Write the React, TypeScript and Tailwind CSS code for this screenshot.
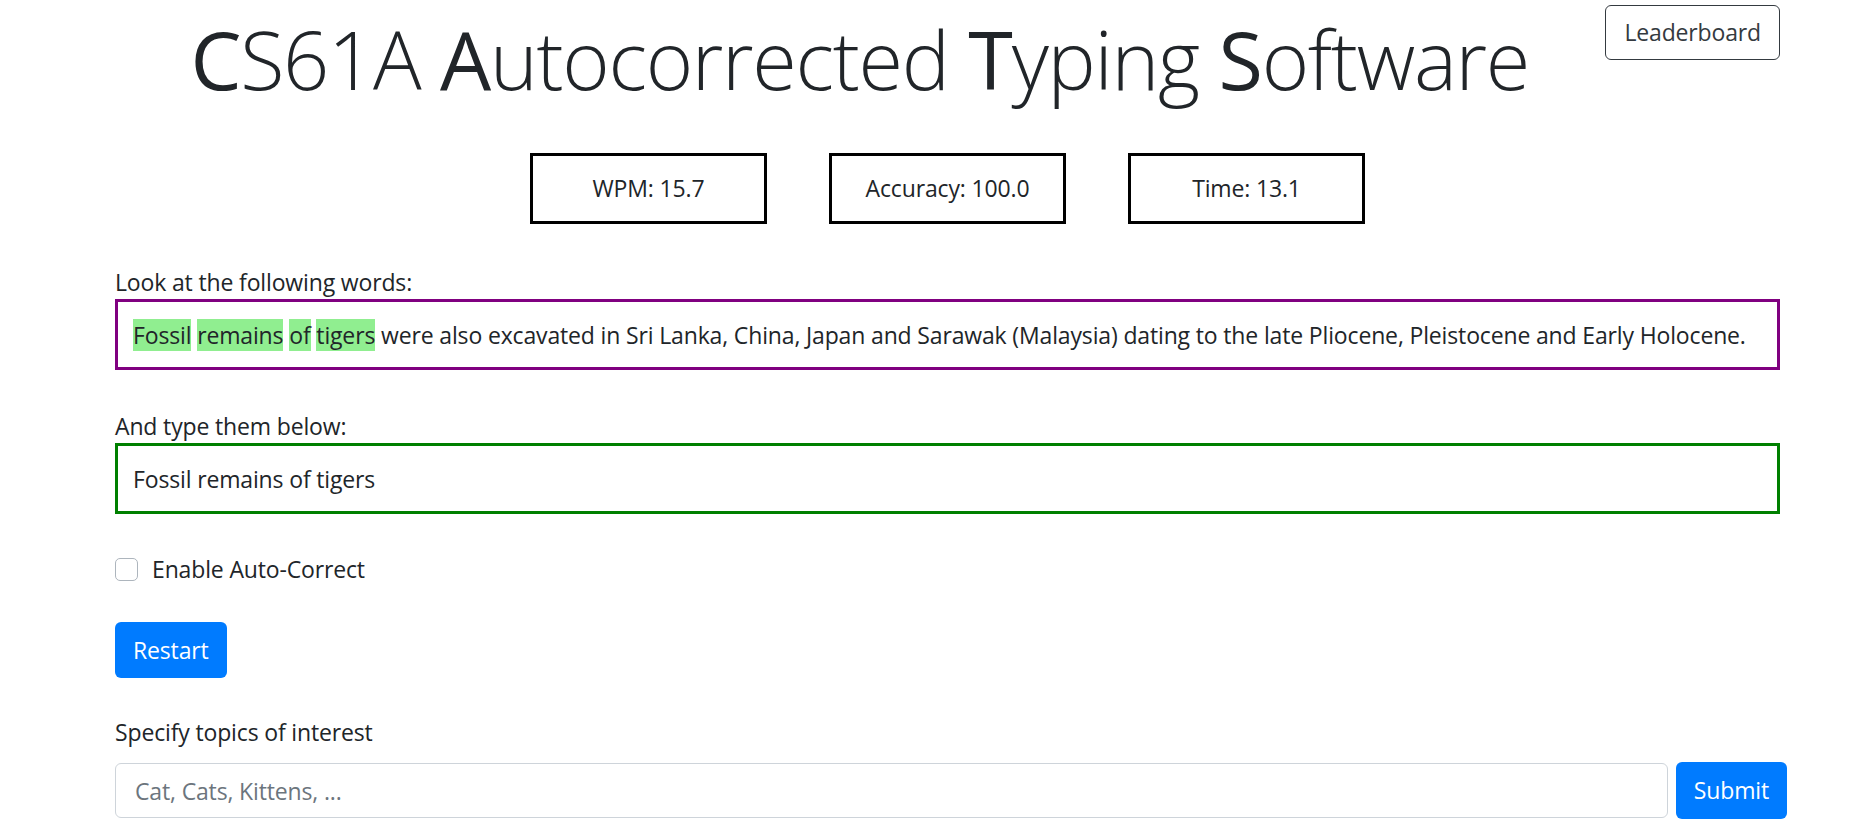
import { useState } from "react";

const stats = [
    { label: "WPM", value: "15.7" },
    { label: "Accuracy", value: "100.0" },
    { label: "Time", value: "13.1" },
];

const typedWords = ["Fossil", "remains", "of", "tigers"];
const restOfPrompt =
    "were also excavated in Sri Lanka, China, Japan and Sarawak (Malaysia) dating to the late Pliocene, Pleistocene and Early Holocene.";

export default function App() {
    const [typed, setTyped] = useState("Fossil remains of tigers");
    const [autoCorrect, setAutoCorrect] = useState(false);
    const [topics, setTopics] = useState("");

    return (
        <div className="min-h-screen bg-white text-[#212529] font-['Open_Sans',sans-serif] text-[23px] tracking-[-0.15px] leading-[1.5]">
            <div className="w-[1665px] ml-[115px]">
                {/* header */}
                <div className="flex items-start">
                    <h1 className="w-[1492px] text-center text-[81px] tracking-[-1.3px] font-light leading-[1.2] mt-[10px]">
                        <span className="font-normal">C</span>S61A <span className="font-normal">A</span>utocorrected{" "}
                        <span className="font-normal">T</span>yping <span className="font-normal">S</span>oftware
                    </h1>
                    <button className="ml-[1px] mt-[5px] h-[55px] px-[18px] border border-[#343a40] rounded-[6px] text-[#343a40] leading-none">
                        Leaderboard
                    </button>
                </div>

                {/* stats */}
                <div className="flex justify-center gap-[62px] mt-[46px]">
                    {stats.map((s) => (
                        <div
                            key={s.label}
                            className="w-[237px] h-[71px] border-[3px] border-black flex items-center justify-center"
                        >
                            {s.label}: {s.value}
                        </div>
                    ))}
                </div>

                {/* prompt */}
                <div className="mt-[41px] leading-[34px]">Look at the following words:</div>
                <div className="h-[71px] border-[3px] border-[#800080] flex items-center px-[15px] whitespace-nowrap">
                    <span className="leading-[38px]">
                        {typedWords.map((w) => (
                            <span key={w}>
                                <span className="bg-[#90ee90]">{w}</span>{" "}
                            </span>
                        ))}
                        {restOfPrompt}
                    </span>
                </div>

                {/* typing area */}
                <div className="mt-[39px] leading-[34px]">And type them below:</div>
                <input
                    value={typed}
                    onChange={(e) => setTyped(e.target.value)}
                    className="block w-full h-[71px] border-[3px] border-[#008000] px-[15px] outline-none"
                />

                {/* auto-correct */}
                <label className="mt-[37px] flex items-center h-[36px]">
                    <input
                        type="checkbox"
                        checked={autoCorrect}
                        onChange={(e) => setAutoCorrect(e.target.checked)}
                        className="appearance-none w-[23px] h-[23px] border border-[#adb5bd] rounded-[5px] bg-white"
                    />
                    <span className="ml-[14px]">Enable Auto-Correct</span>
                </label>

                <button className="mt-[35px] h-[56px] px-[18px] bg-[#007bff] text-white rounded-[6px] leading-none">
                    Restart
                </button>

                {/* topics */}
                <div className="mt-[37px] leading-[34px]">Specify topics of interest</div>
                <div className="mt-[13px] flex items-center w-[1672px]">
                    <input
                        value={topics}
                        onChange={(e) => setTopics(e.target.value)}
                        placeholder="Cat, Cats, Kittens, ..."
                        className="flex-1 h-[55px] border border-[#ced4da] rounded-[6px] px-[19px] outline-none placeholder:text-[#6c757d]"
                    />
                    <button className="ml-[8px] h-[57px] px-[18px] bg-[#007bff] text-white rounded-[6px] leading-none">
                        Submit
                    </button>
                </div>
            </div>
        </div>
    );
}
